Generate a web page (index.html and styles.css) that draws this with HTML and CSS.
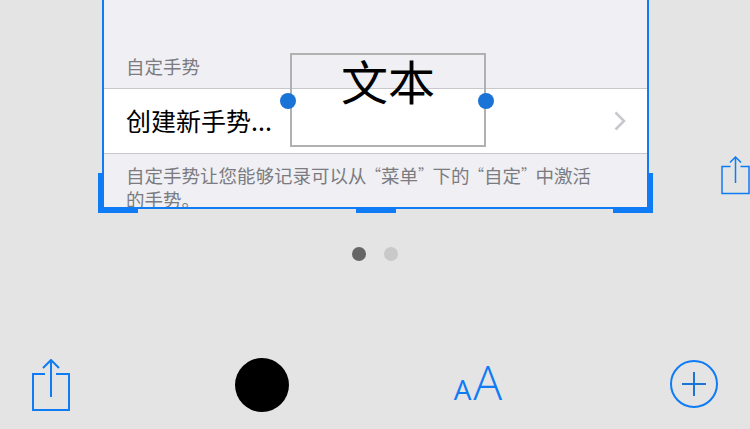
FILE: index.html
```html
<!DOCTYPE html>
<html lang="zh-CN">
<head>
  <meta charset="UTF-8" />
  <meta name="viewport" content="width=device-width, initial-scale=1.0" />
  <title>标记</title>
  <link rel="stylesheet" href="styles.css">
</head>
<body>
  <main class="stage">
    <section class="shot">
      <div class="shot-page">
        <h2 class="group-title">自定手势</h2>
        <div class="group-row">
          <span>创建新手势...</span>
          <svg class="chevron" width="13" height="20" viewBox="0 0 13 20"><path d="M1.500 1.500 10 10 1.500 18.500" fill="none" stroke="#c7c7cc" stroke-width="2.500"/></svg>
        </div>
        <p class="group-note">自定手势让您能够记录可以从<span class="quote">“</span>菜单<span class="quote">”</span>下的<span class="quote">“</span>自定<span class="quote">”</span>中激活<br>的手势。</p>
      </div>

      <!-- crop handles -->
      <span class="crop crop-left"></span>
      <span class="crop crop-mid"></span>
      <span class="crop crop-right"></span>

      <!-- text annotation on top of the screenshot -->
      <div class="note-box">
        文本
        <span class="dot dot-left"></span>
        <span class="dot dot-right"></span>
      </div>
    </section>

    <svg class="next-share" width="29" height="39" viewBox="0 0 29 39">
      <path d="M9.500 10.500H1v27h27v-27h-8.500" fill="none" stroke="#0f7bf5" stroke-width="1.500"/>
      <path d="M14.500 1v26M9 6.500l5.500-5.500 5.500 5.500" fill="none" stroke="#0f7bf5" stroke-width="1.500"/>
    </svg>
  </main>

  <div class="pager">
    <span class="pager-dot active"></span>
    <span class="pager-dot"></span>
  </div>

  <footer class="toolbar">
    <svg class="tool-share" width="38" height="52" viewBox="0 0 38 52">
      <path d="M13 15H1v36h36V15H24" fill="none" stroke="#0f7bf5" stroke-width="2"/>
      <path d="M19 1v37M11 9l8-8 8 8" fill="none" stroke="#0f7bf5" stroke-width="2"/>
    </svg>
    <span class="tool-color"></span>
    <span class="tool-font"><small>A</small>A</span>
    <svg class="tool-add" width="48" height="48" viewBox="0 0 48 48">
      <circle cx="24" cy="24" r="23" fill="none" stroke="#0f7bf5" stroke-width="2"/>
      <path d="M12 24h24M24 12v24" fill="none" stroke="#1a73d6" stroke-width="2"/>
    </svg>
  </footer>
</body>
</html>
```

FILE: styles.css
```css
* {
  box-sizing: border-box;
}

body {
  margin: 0;
  height: 429px;
  overflow: hidden;
  background: #e4e4e4;
  font-family: "Noto Sans CJK SC", "Liberation Sans", sans-serif;
}

.stage {
  display: flex;
  align-items: flex-start;
  padding-left: 102px;
  height: 213px;
}

.shot {
  position: relative;
  width: 547px;
  height: 209px;
  border: 2px solid #0f7bf5;
  border-top: none;
}

.shot-page {
  height: 100%;
  overflow: hidden;
  background: #efeff4;
  padding-top: 52px;
}

.group-title {
  margin: 0;
  padding-left: 22px;
  height: 36px;
  font-size: 18.500px;
  font-weight: 400;
  line-height: 28px;
  color: #7b7b80;
}

.group-row {
  display: flex;
  align-items: center;
  justify-content: space-between;
  height: 66px;
  padding: 0 20px 0 22px;
  background: #fff;
  border-top: 1px solid #c8c7cc;
  border-bottom: 1px solid #c8c7cc;
  font-size: 25px;
  color: #000;
}

.group-row span {
  margin-top: -3px;
}

.group-note {
  margin: 0;
  padding: 9px 0 0 22px;
  font-size: 18.500px;
  line-height: 24px;
  color: #7b7b80;
}

/* the font's quotes take a full em, the reference sets them narrower */
.quote {
  font-size: 14.500px;
  line-height: 1;
  vertical-align: 3px;
}

.crop {
  position: absolute;
  width: 40px;
  height: 4px;
  bottom: -6px;
  background: #0f7bf5;
}

.crop-left {
  left: -6px;
  height: 40px;
  border-bottom: 4px solid #0f7bf5;
  background: linear-gradient(to right, #0f7bf5 4px, transparent 4px);
}

.crop-mid {
  left: 252px;
}

.crop-right {
  right: -6px;
  height: 40px;
  border-bottom: 4px solid #0f7bf5;
  background: linear-gradient(to left, #0f7bf5 4px, transparent 4px);
}

.note-box {
  position: absolute;
  left: 186px;
  top: 53px;
  width: 196px;
  height: 94px;
  border: 2px solid #b0b0b0;
  font-size: 47px;
  line-height: 50px;
  text-align: center;
  color: #000;
}

.dot {
  position: absolute;
  top: 38px;
  width: 16px;
  height: 16px;
  border-radius: 50%;
  background: #1a73d6;
}

.dot-left {
  left: -12px;
}

.dot-right {
  right: -10px;
}

.next-share {
  margin: 156px 0 0 72px;
  flex-shrink: 0;
}

.pager {
  display: flex;
  justify-content: center;
  gap: 18px;
  margin-top: 34px;
}

.pager-dot {
  width: 14px;
  height: 14px;
  border-radius: 50%;
  background: #c9c9c9;
}

.pager-dot.active {
  background: #666;
}

.toolbar {
  display: flex;
  align-items: flex-start;
  justify-content: space-between;
  padding: 0 32px;
  margin-top: 97px;
}

.tool-share {
  margin-top: 1px;
}

.tool-color {
  width: 54px;
  height: 54px;
  border-radius: 50%;
  background: #000;
}

.tool-font {
  font-family: "Open Sans", sans-serif;
  font-size: 48px;
  font-weight: 300;
  line-height: 48px;
  color: #0f7bf5;
}

.tool-font small {
  font-size: 28px;
  font-weight: 400;
  margin-right: 2px;
}

.tool-add {
  margin: 2px 0 0 3px;
}
```
